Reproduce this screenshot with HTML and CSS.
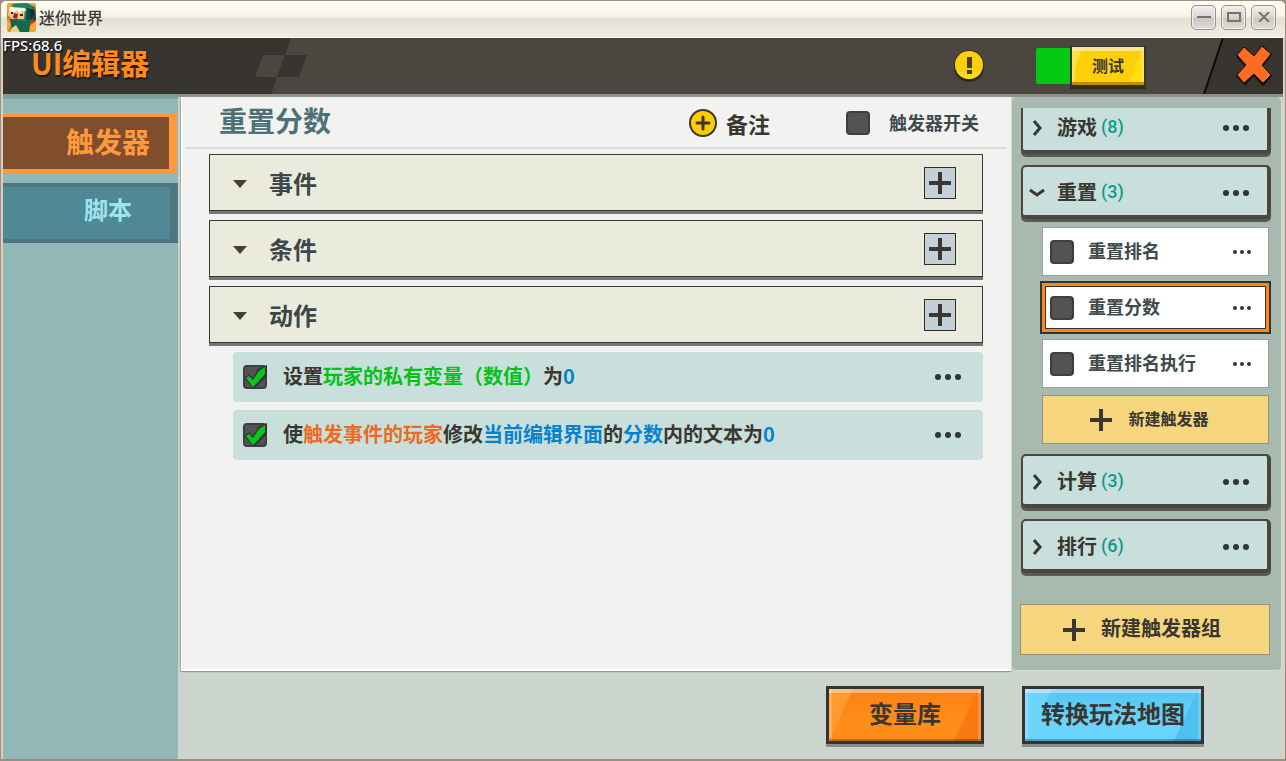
FILE: index.html
```html
<!DOCTYPE html>
<html lang="zh-CN">
<head>
<meta charset="utf-8">
<title>迷你世界</title>
<link rel="stylesheet" href="styles.css">
</head>
<body>
<svg class="sprite" aria-hidden="true">
  <symbol id="plus" viewBox="0 0 22 22"><path d="M9 0h4v9h9v4h-9v9H9v-9H0V9h9z" fill="currentColor"/></symbol>
  <symbol id="dots" viewBox="0 0 26 6"><circle cx="3" cy="3" r="3"/><circle cx="13" cy="3" r="3"/><circle cx="23" cy="3" r="3"/></symbol>
  <symbol id="dots-small" viewBox="0 0 18 4"><circle cx="2" cy="2" r="2"/><circle cx="9" cy="2" r="2"/><circle cx="16" cy="2" r="2"/></symbol>
  <symbol id="chevron" viewBox="0 0 16 16"><path d="M5 1l6 7-6 7" fill="none" stroke="currentColor" stroke-width="3"/></symbol>
  <symbol id="chevron-down" viewBox="0 0 16 16"><path d="M1 5l7 5 7-5" fill="none" stroke="currentColor" stroke-width="3"/></symbol>
  <symbol id="triangle" viewBox="0 0 14 8"><path d="M0 0h14L7 8z" fill="#463f35"/></symbol>
</svg>
<div class="window">
  <div class="titlebar">
    <svg class="app-icon" viewBox="0 0 29 29" aria-hidden="true">
      <clipPath id="icon-clip"><rect width="29" height="29" rx="3"/></clipPath>
      <g clip-path="url(#icon-clip)">
        <rect width="29" height="29" fill="#e87a1c"/>
        <path d="M0 0h6L0 9zM17 0h12v5zM0 17l5 3-5 9zM29 18v11H16z" fill="#f9a536"/>
        <path d="M6 1l14-1 8 4 1 12-9 6-16-3z" fill="#1a8658"/>
        <path d="M20 5l8 2 1 10-7 4-3-5z" fill="#0d4b3c"/>
        <path d="M23 7l3-1 1 6-4 3z" fill="#22244a"/>
        <path d="M2 5l16 1-1 10-12 0-4-4z" fill="#f3c58d"/>
        <path d="M3 4l15 1 1 3-4 0-2 2-3-3-3 2-5-1z" fill="#fffdf0"/>
        <path d="M4 9h2v2H4zM13 11h3v2h-3z" fill="#2f2b24"/>
        <path d="M7 10l4 1-1 5-4-1z" fill="#a4231b"/>
        <path d="M3 16l15 2 6-2-2 13H5z" fill="#14694c"/>
        <path d="M5 25l4-3 4 7H3z" fill="#e0d685"/>
        <path d="M23 18l3-2 2 3-4 2z" fill="#cf3a1e"/>
      </g>
    </svg>
    <span class="window-title">迷你世界</span>
    <div class="window-controls">
      <button type="button" aria-label="最小化"><svg viewBox="0 0 14 10"><path d="M0 5h14" /></svg></button>
      <button type="button" aria-label="最大化"><svg viewBox="0 0 14 10"><path d="M1 1h12v8H1z" /></svg></button>
      <button type="button" aria-label="关闭"><svg viewBox="0 0 14 10"><path d="M2 0l10 10M12 0L2 10" /></svg></button>
    </div>
  </div>
  <div class="app">
    <span class="fps">FPS:68.6</span>
    <header class="topbar">
      <h1>UI编辑器</h1>
      <svg class="brand-edge" viewBox="0 0 52 56" aria-hidden="true">
        <path d="M0 0h36L16 56H0z" fill="#383530"/>
        <path d="M8 17h22l-8 22H0z" fill="#4b463f"/>
        <path d="M30 17h22l-8 22H22z" fill="#383530"/>
      </svg>
      <div class="top-actions">
        <button class="alert" type="button" aria-label="提示">
          <svg viewBox="0 0 32 32"><circle cx="16" cy="17" r="15" fill="#2c2925"/><circle cx="16" cy="15" r="15" fill="#37342f"/><circle cx="16" cy="15" r="14" fill="#ffce0a"/><path d="M4 22a14 14 0 0 0 24 0z" fill="#f9dc17"/><path d="M14 7h5v11h-5zM14 20h5v4h-5z" fill="#45401f"/></svg>
        </button>
        <div class="test">
          <span class="status"></span>
          <button class="glossy yellow" type="button">测试</button>
        </div>
      </div>
      <svg class="close-edge" viewBox="0 0 20 56" aria-hidden="true"><path d="M20 0v56H0z" fill="#383530"/><path d="M20 0L1 56" stroke="#0c0b0a" stroke-width="2"/></svg>
      <button class="close" type="button" aria-label="关闭编辑器">
        <svg viewBox="0 0 38 42"><path d="M10 4l9 9 9-10 8 8-9 11 9 10-8 9-9-10-9 9-8-8 9-10-9-10z" fill="#171513" stroke="#171513" stroke-width="2" stroke-linejoin="round"/><path d="M9 3l10 9 8-10 9 8-9 11 9 10-8 8-9-9-10 9-7-8 9-10-9-10z" fill="#ff6c22" stroke="#171513" stroke-linejoin="round"/></svg>
      </button>
    </header>
    <div class="workspace">
      <nav class="tabs">
        <a class="tab active" href="#triggers">触发器</a>
        <a class="tab" href="#script">脚本</a>
      </nav>
      <div class="content">
        <div class="panels">
          <main class="editor" id="triggers">
            <div class="editor-head">
              <h2>重置分数</h2>
              <button class="note" type="button">
                <svg viewBox="0 0 28 28"><circle cx="14" cy="14" r="13" fill="#ffcb05" stroke="#3a3731" stroke-width="2"/><path d="M14 8v12M8 14h12" stroke="#3a3731" stroke-width="3" stroke-linecap="round"/></svg>
                备注
              </button>
              <label class="switch"><input type="checkbox"><span>触发器开关</span></label>
            </div>
            <div class="editor-body">
              <section class="block"><svg class="fold"><use href="#triangle"/></svg><h3>事件</h3><button type="button" aria-label="添加事件"><svg><use href="#plus"/></svg></button></section>
              <section class="block"><svg class="fold"><use href="#triangle"/></svg><h3>条件</h3><button type="button" aria-label="添加条件"><svg><use href="#plus"/></svg></button></section>
              <section class="block"><svg class="fold"><use href="#triangle"/></svg><h3>动作</h3><button type="button" aria-label="添加动作"><svg><use href="#plus"/></svg></button></section>
              <ul class="actions">
                <li>
                  <label><input type="checkbox" checked><span>设置<span class="green">玩家的私有变量（数值）</span>为<span class="blue">0</span></span></label>
                  <button class="more" type="button" aria-label="更多"><svg><use href="#dots"/></svg></button>
                </li>
                <li>
                  <label><input type="checkbox" checked><span>使<span class="orange">触发事件的玩家</span>修改<span class="blue">当前编辑界面</span>的<span class="blue">分数</span>内的文本为<span class="blue">0</span></span></label>
                  <button class="more" type="button" aria-label="更多"><svg><use href="#dots"/></svg></button>
                </li>
              </ul>
            </div>
          </main>
          <aside class="library">
            <div class="groups">
              <div class="group"><svg class="arrow"><use href="#chevron"/></svg><span>游戏</span><span class="count">(8)</span><button class="more" type="button" aria-label="更多"><svg><use href="#dots"/></svg></button></div>
              <div class="group"><svg class="arrow"><use href="#chevron-down"/></svg><span>重置</span><span class="count">(3)</span><button class="more" type="button" aria-label="更多"><svg><use href="#dots"/></svg></button></div>
              <div class="triggers">
                <div class="trigger"><label><input type="checkbox"><span>重置排名</span></label><button class="more small" type="button" aria-label="更多"><svg><use href="#dots-small"/></svg></button></div>
                <div class="trigger selected"><label><input type="checkbox"><span>重置分数</span></label><button class="more small" type="button" aria-label="更多"><svg><use href="#dots-small"/></svg></button></div>
                <div class="trigger"><label><input type="checkbox"><span>重置排名执行</span></label><button class="more small" type="button" aria-label="更多"><svg><use href="#dots-small"/></svg></button></div>
                <button class="create" type="button"><svg><use href="#plus"/></svg><span>新建触发器</span></button>
              </div>
              <div class="group"><svg class="arrow"><use href="#chevron"/></svg><span>计算</span><span class="count">(3)</span><button class="more" type="button" aria-label="更多"><svg><use href="#dots"/></svg></button></div>
              <div class="group"><svg class="arrow"><use href="#chevron"/></svg><span>排行</span><span class="count">(6)</span><button class="more" type="button" aria-label="更多"><svg><use href="#dots"/></svg></button></div>
            </div>
            <button class="create large" type="button"><svg><use href="#plus"/></svg><span>新建触发器组</span></button>
          </aside>
        </div>
        <footer class="footer">
          <button class="glossy orange-button" type="button">变量库</button>
          <button class="glossy blue-button" type="button">转换玩法地图</button>
        </footer>
      </div>
    </div>
  </div>
</div>
</body>
</html>
```
FILE: styles.css
```css
* { box-sizing: border-box; }

body {
  margin: 0;
  font-family: "Noto Sans CJK SC", sans-serif;
  font-weight: 700;
  color: #3a3731;
  background: #9c8e82;
}

h1, h2, h3, ul { margin: 0; padding: 0; }
button { margin: 0; padding: 0; border: 0; background: none; font: inherit; color: inherit; cursor: pointer; }
a { color: inherit; text-decoration: none; }
svg { display: block; flex: none; }
.sprite { position: absolute; width: 0; height: 0; }

.window {
  display: flex;
  flex-direction: column;
  min-height: 100vh;
  border: solid #9c8e82;
  border-width: 1px 1px 2px;
  border-radius: 6px 6px 0 0;
  background: #d9d0c2;
}

/* Window frame */
.titlebar {
  display: flex;
  align-items: center;
  height: 37px;
  padding: 0 9px 4px 6px;
  border-radius: 5px 5px 0 0;
  border-bottom: 1px solid #fdfcf6;
  background: linear-gradient(#fdfdf2 0, #f6f5e7 15px, #e4dfd3 18px, #e9e6dc 26px, #efede1 36px);
}
.app-icon { width: 29px; height: 29px; }
.window-title { flex: 1; margin-left: 3px; font-size: 16px; line-height: 20px; font-weight: 500; color: #3d3a38; }
.window-controls { display: flex; gap: 5px; }
.window-controls button {
  display: grid;
  place-items: center;
  width: 25px;
  height: 25px;
  border: 1px solid #9b9088;
  border-radius: 5px;
  background: linear-gradient(#f1efee, #d8d4d1 50%, #cbc7c3 55%, #e0dcd8);
  box-shadow: inset 0 0 0 1px #f3f0ee;
}
.window-controls svg { width: 14px; height: 10px; fill: none; stroke: #7b706b; stroke-width: 2; }

.app { position: relative; display: flex; flex: 1; flex-direction: column; margin: 0 2px; }
.fps {
  position: absolute;
  top: -1px;
  left: 0;
  font: 500 15px/16px "Noto Sans", sans-serif;
  color: #fff;
  text-shadow: 1px 1px 1px #000;
}

/* Top bar */
.topbar { display: flex; height: 56px; background: #4b463f; }
.topbar h1 {
  width: 252px;
  padding-left: 28px;
  font-size: 29px;
  line-height: 48px;
  color: #ff8a1e;
  background: #383530;
  text-shadow: 1px 2px 1px #1b1917;
}
.brand-edge { width: 52px; height: 56px; }
.top-actions { display: flex; flex: 1; align-items: center; justify-content: flex-end; gap: 51px; margin-right: 57px; }
.alert svg { width: 32px; height: 32px; }
.test { display: flex; align-items: center; }
.status { width: 34px; height: 36px; border-radius: 2px 0 0 2px; background: #03c814; }
.close-edge { width: 20px; height: 56px; }
.close { display: grid; place-items: center; width: 60px; padding: 0 0 2px 2px; background: #383530; }
.close svg { width: 38px; height: 42px; }

.glossy {
  border: 3px solid #37342f;
  box-shadow: inset 0 -2px 0 #0004, inset 0 4px 0 #fff6, inset 3px 0 0 #fff3, inset -3px 0 0 #fff3, 0 3px 0 #0005;
}
.yellow {
  width: 76px;
  height: 40px;
  padding-bottom: 2px;
  border-width: 1px 2px;
  font-size: 16px;
  line-height: 24px;
  background: linear-gradient(110deg, #ffe13c 12%, #ffd00a 13% 82%, #ffdf10 83%);
  box-shadow: inset 0 -3px 0 #c48a00, inset 0 4px 0 #ffe68c, inset 3px 0 0 #ffe34d, inset -3px 0 0 #ffe34d, 0 3px 0 #302d29;
}

/* Side tabs */
.workspace { display: flex; flex: 1; }
.tabs {
  display: flex;
  flex-direction: column;
  gap: 10px;
  width: 175px;
  padding-top: 19px;
  background: linear-gradient(#779794 0, #82a5a2 5px, #91b7b6 5px);
}
.tab {
  height: 60px;
  padding-right: 38px;
  border: solid #4d7680;
  border-width: 4px 8px 4px 0;
  font-size: 24px;
  line-height: 44px;
  text-align: right;
  color: #9de4ee;
  background: #4f8996;
}
.tab.active {
  margin-right: 1px;
  padding-right: 19px;
  border-color: #ff993e;
  font-size: 28px;
  line-height: 48px;
  color: #ff993e;
  background: #804d2d;
}

/* Main area */
.content {
  display: flex;
  flex: 1;
  flex-direction: column;
  min-width: 0;
  padding-top: 3px;
  background: linear-gradient(#8b928b 0, #8b928b 3px, #cbd4cd 3px);
}
.panels { display: flex; flex: 1; padding: 0 1px 0 3px; }
.editor {
  flex: 1;
  min-width: 0;
  border: solid #fff;
  border-width: 0 0 2px 1px;
  background: #f2f2f1;
  box-shadow: 0 1px 1px #8f9892, -1px 0 1px #a8afa9;
}
.editor-head {
  display: flex;
  align-items: center;
  height: 52px;
  margin: 0 4px 0 3px;
  padding: 2px 28px 0 34px;
  border-bottom: 2px solid #d1e2d8;
}
.editor-head h2 { flex: 1; padding-bottom: 6px; font-size: 28px; line-height: 40px; color: #4c7177; }
.note { display: flex; align-items: center; gap: 9px; margin-right: 76px; font-size: 22px; line-height: 32px; }
.note svg { width: 28px; height: 28px; }
.switch { display: flex; align-items: center; gap: 19px; font-size: 18px; line-height: 26px; color: #3e4a4d; }
.switch span { padding-bottom: 2px; }

input[type="checkbox"] {
  position: relative;
  flex: none;
  width: 24px;
  height: 24px;
  margin: 0;
  appearance: none;
  border: 2px solid #3f3f3f;
  border-radius: 4px;
  background: #535353;
}
input:checked::before, input:checked::after { content: ""; position: absolute; inset: -2px; }
input:checked::before {
  background: #353535;
  clip-path: polygon(1px 13px, 6px 9px, 10px 13px, 15px 4px, 24px 0, 24px 11px, 15px 20px, 11px 24px);
}
input:checked::after {
  background: #06c81a;
  clip-path: polygon(3px 13px, 6px 11px, 10px 15px, 16px 6px, 22px 2px, 22px 9px, 15px 17px, 10px 22px);
}

.editor-body { display: flex; flex-direction: column; gap: 6px; padding: 5px 28px 20px 27px; }
.block {
  display: flex;
  align-items: center;
  height: 57px;
  margin-bottom: 3px;
  padding: 0 26px 0 23px;
  border: 1px solid #3a3833;
  background: #eaebdc;
  box-shadow: 0 3px 0 #777672;
}
.fold { width: 14px; height: 8px; margin-top: 2px; }
.block h3 { flex: 1; margin-left: 22px; font-size: 24px; line-height: 34px; color: #3d4648; }
.block button {
  display: grid;
  place-items: center;
  width: 32px;
  height: 32px;
  border: 1px solid #302e2a;
  background: #c3d0d5;
}
.block button svg { width: 22px; height: 22px; }

.actions { display: flex; flex-direction: column; gap: 8px; margin-left: 24px; list-style: none; }
.actions li { display: flex; align-items: center; height: 50px; padding: 0 22px 0 10px; border-radius: 4px; background: #c9dfdb; }
.actions label { display: flex; flex: 1; align-items: center; gap: 16px; font-size: 20px; line-height: 30px; }
.actions label > span { padding-bottom: 2px; }
.green { color: #06c217; }
.blue { color: #0882cd; }
.orange { color: #ee6a1e; }
.more svg { width: 26px; height: 6px; fill: #2f3638; }
.more.small svg { width: 18px; height: 4px; }

/* Trigger library */
.library {
  display: flex;
  flex-direction: column;
  width: 271px;
  padding: 11px 11px 15px 9px;
  border: 1px solid #cfe0d5;
  border-top-width: 0;
  border-radius: 5px;
  background: #a8baaf;
}
.groups { display: flex; flex: 1; flex-direction: column; overflow: hidden; margin-right: -1px; }
.group {
  display: flex;
  align-items: center;
  height: 54px;
  flex: none;
  margin: 0 0 11px;
  padding: 3px 18px 0 6px;
  border: solid #4b463f;
  border-width: 2px 4px 4px 2px;
  border-radius: 5px;
  font-size: 20px;
  line-height: 30px;
  background: #c9dfdb;
  box-shadow: 0 3px 0 #535c56;
}
.group:first-child { margin-top: -8px; }
.group span { padding-bottom: 2px; }
.arrow { width: 16px; height: 16px; margin-right: 12px; }
.count { flex: 1; margin-left: 4px; font-family: Roboto, sans-serif; font-weight: 500; color: #0b9b8d; font-size: 18px; }
.triggers { display: flex; flex-direction: column; gap: 7px; margin: -3px 2px 10px 21px; }
.trigger {
  display: flex;
  align-items: center;
  height: 49px;
  padding: 0 17px 0 7px;
  border: 1px solid #93a49a;
  background: #fff;
}
.trigger label { display: flex; flex: 1; align-items: center; gap: 14px; font-size: 18px; line-height: 26px; color: #3e4a4d; }
.trigger label span, .create span { padding-bottom: 3px; }
.trigger.selected {
  padding: 0 15px 0 5px;
  border: 3px solid #ff8619;
  box-shadow: 0 0 0 2px #37342f, inset 0 0 0 1px #37342f;
}
.create {
  display: flex;
  align-items: center;
  justify-content: center;
  gap: 16px;
  height: 49px;
  padding-right: 12px;
  border: 1px solid #8d957d;
  font-size: 16px;
  line-height: 24px;
  background: #f5d67f;
}
.create svg { width: 22px; height: 22px; }
.create.large { height: 51px; margin: 0 0 0 -1px; padding-right: 6px; font-size: 20px; }

/* Footer */
.footer { display: flex; justify-content: flex-end; gap: 38px; padding: 15px 79px 15px 20px; }
.footer .glossy { height: 58px; padding-bottom: 4px; font-size: 24px; line-height: 36px; }
.orange-button { width: 158px; background: linear-gradient(115deg, #ff9a2e 13%, transparent 14% 84%, #fa7a12 85%), linear-gradient(#fd7f13, #ff8d1a 60%); }
.blue-button { width: 182px; background: linear-gradient(115deg, #6cd5fd 13%, transparent 14% 86%, #4cc0ee 87%), linear-gradient(#50c5f1, #6bd4fd 60%); }
```
